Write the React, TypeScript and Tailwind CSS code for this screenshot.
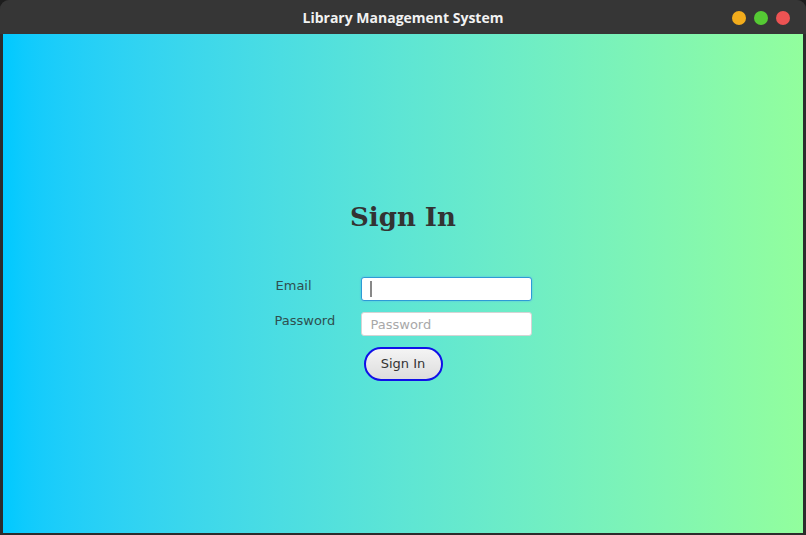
export default function App() {
    return (
        <div className="h-[535px] w-[806px] bg-[#1d1d1d]">
            <div className="flex h-full w-full flex-col overflow-hidden rounded-t-[9px] bg-[#2c2c2c]">
                {/* title bar */}
                <div className="relative flex h-[34px] shrink-0 items-center justify-center bg-[#363636]">
                    <span className="font-['Open_Sans',sans-serif] text-[14px] font-bold text-[#f2f2f2]">
                        Library Management System
                    </span>
                    <div className="absolute top-[11px] right-[16px] flex gap-[8px]">
                        <span className="h-[14px] w-[14px] rounded-full bg-[#f2ac1c]" />
                        <span className="h-[14px] w-[14px] rounded-full bg-[#55c934]" />
                        <span className="h-[14px] w-[14px] rounded-full bg-[#ec5353]" />
                    </div>
                </div>

                {/* content */}
                <div className="flex flex-1 px-[3px] pb-[2px]">
                    <div className="flex flex-1 flex-col items-center bg-gradient-to-r from-[#00c9ff] to-[#92fe9d] pt-[166px]">
                        <h1 className="h-[34px] font-['DejaVu_Serif',serif] text-[26px] leading-[34px] font-bold text-[#333333]">
                            Sign In
                        </h1>

                        <div className="mt-[43px] grid grid-cols-[86px_171px] gap-y-[11px] font-['DejaVu_Sans',sans-serif] text-[13px] text-[#2f4f4f]">
                            <div className="flex h-[24px] items-center pb-[6px] pl-[1px]">Email</div>
                            <div className="flex h-[24px] items-center rounded-[3px] border border-[#2e9ad6] bg-white pl-[8px] shadow-[0_0_2px_#5ab4ea]">
                                <span className="h-[16px] w-[2px] bg-[#888888]" />
                            </div>
                            <div className="flex h-[24px] items-center pb-[6px]">Password</div>
                            <input
                                placeholder="Password"
                                className="h-[24px] w-full rounded-[3px] border border-[#d4d4d4] bg-white pl-[9px] text-[13px] text-[#333] outline-none placeholder:text-[#a8a8a8]"
                            />
                        </div>

                        <button className="mt-[11px] h-[34px] w-[79px] rounded-full border-2 border-[#1010e8] bg-gradient-to-b from-[#f4f4f4] to-[#dddddd] font-['DejaVu_Sans',sans-serif] text-[13px] text-[#333333]">
                            Sign In
                        </button>
                    </div>
                </div>
            </div>
        </div>
    );
}
